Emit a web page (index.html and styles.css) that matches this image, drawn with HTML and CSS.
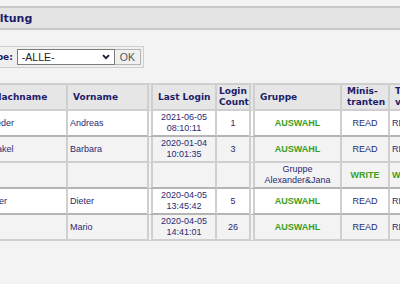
FILE: index.html
```html
<!DOCTYPE html>
<html lang="de">
<head>
<meta charset="utf-8">
<title>Benutzerverwaltung</title>
<link rel="stylesheet" href="styles.css">
</head>
<body>
<div class="page">
  <div class="titlebar"><h1 class="title">Benutzerverwaltung</h1></div>
  <form class="filter">
    <label class="filter-label" for="grp">Gruppe:</label>
    <span class="select-wrap">
      <select id="grp" class="select"><option>-ALLE-</option></select>
      <svg class="chev" width="8" height="6" viewBox="0 0 8 6"><path d="M1 1.2 L4 4.2 L7 1.2" fill="none" stroke="#1a1a3a" stroke-width="1.8"/></svg>
    </span>
    <button type="button" class="btn">OK</button>
  </form>
  <table class="users">
    <colgroup>
      <col class="c-nach"><col class="c-vor"><col class="c-last"><col class="c-cnt"><col class="c-grp"><col class="c-min"><col class="c-t">
    </colgroup>
    <thead>
      <tr>
        <th class="first">Nachname</th>
        <th class="nor">Vorname</th>
        <th class="dbl">Last Login</th>
        <th class="nor tight">Login<br>Count</th>
        <th class="dbl">Gruppe</th>
        <th>Minis-<br>tranten</th>
        <th>Texte-<br>verw.</th>
      </tr>
    </thead>
    <tbody>
      <tr class="odd endgrp">
        <td class="first">Leder</td>
        <td class="nor">Andreas</td>
        <td class="dbl ctr">2021-06-05<br>08:10:11</td>
        <td class="nor ctr">1</td>
        <td class="dbl ctr ok">AUSWAHL</td>
        <td class="ctr">READ</td>
        <td>READ</td>
      </tr>
      <tr class="even">
        <td class="first">Pakel</td>
        <td class="nor">Barbara</td>
        <td class="dbl ctr">2020-01-04<br>10:01:35</td>
        <td class="nor ctr">3</td>
        <td class="dbl ctr ok">AUSWAHL</td>
        <td class="ctr">READ</td>
        <td>READ</td>
      </tr>
      <tr class="even endgrp">
        <td class="first"></td>
        <td class="nor"></td>
        <td class="dbl"></td>
        <td class="nor"></td>
        <td class="dbl ctr">Gruppe<br>Alexander&amp;Jana</td>
        <td class="ctr ok">WRITE</td>
        <td class="ok">WRITE</td>
      </tr>
      <tr class="odd endgrp">
        <td class="first">Kier</td>
        <td class="nor">Dieter</td>
        <td class="dbl ctr">2020-04-05<br>13:45:42</td>
        <td class="nor ctr">5</td>
        <td class="dbl ctr ok">AUSWAHL</td>
        <td class="ctr">READ</td>
        <td>READ</td>
      </tr>
      <tr class="even">
        <td class="first">Li</td>
        <td class="nor">Mario</td>
        <td class="dbl ctr">2020-04-05<br>14:41:01</td>
        <td class="nor ctr">26</td>
        <td class="dbl ctr ok">AUSWAHL</td>
        <td class="ctr">READ</td>
        <td>READ</td>
      </tr>
    </tbody>
  </table>
</div>
</body>
</html>
```
FILE: styles.css
```css
html, body {
  margin: 0;
  padding: 0;
  overflow: hidden;
  background: #f3f3f3;
}
.page {
  margin-left: -100px;
  padding-top: 6px;
}
.titlebar {
  background: #e4e4e4;
  border-top: 2px solid #c8c8c8;
  border-bottom: 2px solid #c8c8c8;
  height: 20px;
}
.title {
  margin: 0;
  padding-left: 6px;
  font: bold 11px/21px "DejaVu Sans", sans-serif;
  color: #1c1c6a;
}
.filter {
  margin: 16px 0 0 69px;
  display: inline-flex;
  align-items: center;
  border: 1px solid #cfcfcf;
  background: #efefef;
  padding: 2px;
}
.filter-label {
  font: bold 9px "DejaVu Sans", sans-serif;
  color: #1c1c6a;
  margin-right: 4px;
}
.select-wrap {
  position: relative;
  display: block;
}
.select {
  appearance: none;
  -webkit-appearance: none;
  display: block;
  box-sizing: border-box;
  width: 98px;
  height: 16px;
  margin: 0;
  padding: 0 0 0 4px;
  border: 1px solid #7a7a7a;
  border-radius: 0;
  background: #fff;
  font: 10.5px "Liberation Sans", Arial, sans-serif;
  color: #222;
}
.chev {
  position: absolute;
  right: 5px;
  top: 5px;
}
.btn {
  box-sizing: border-box;
  width: 26px;
  height: 16px;
  margin: 0;
  padding: 0;
  border: 1px solid #b4b4b4;
  border-left: none;
  border-radius: 0;
  background: #f0f0f0;
  font: 10.5px "Liberation Sans", Arial, sans-serif;
  color: #555;
}
.users {
  margin: 15px 0 0 87px;
  border-collapse: separate;
  border-spacing: 0;
  table-layout: fixed;
  width: 445px;
  font: 9px/11px "Liberation Sans", Arial, sans-serif;
  color: #2a2a72;
}
.c-nach { width: 81px; }
.c-vor { width: 79px; }
.c-last { width: 70px; }
.c-cnt { width: 32px; }
.c-grp { width: 93px; }
.c-min { width: 48px; }
.c-t { width: 42px; }
.users th, .users td {
  box-sizing: border-box;
  border-right: 2px solid #cfcfcf;
  border-bottom: 2px solid #cfcfcf;
  vertical-align: middle;
  overflow: hidden;
  white-space: nowrap;
}
.users th {
  background: #e6e6e6;
  border-top: 2px solid #cfcfcf;
  height: 28px;
  padding: 0 1px 0 5px;
  text-align: left;
  font: bold 9px/11px "DejaVu Sans", sans-serif;
  color: #1c1c6a;
}
.users th.tight { padding-left: 2px; padding-right: 0; }
.users td {
  height: 26px;
  padding: 0 2px;
}
.users .first { border-left: 2px solid #cfcfcf; }
.users .nor { border-right: none; }
.users .dbl { border-left: 6px double #cfcfcf; }
.users .ctr { text-align: center; }
.users .ok { color: #3d9e1c; font-weight: bold; }
.odd td { background: #fff; }
.even td { background: #f3f3f3; }
.endgrp td { border-bottom-color: #b4b4b4; }
```
